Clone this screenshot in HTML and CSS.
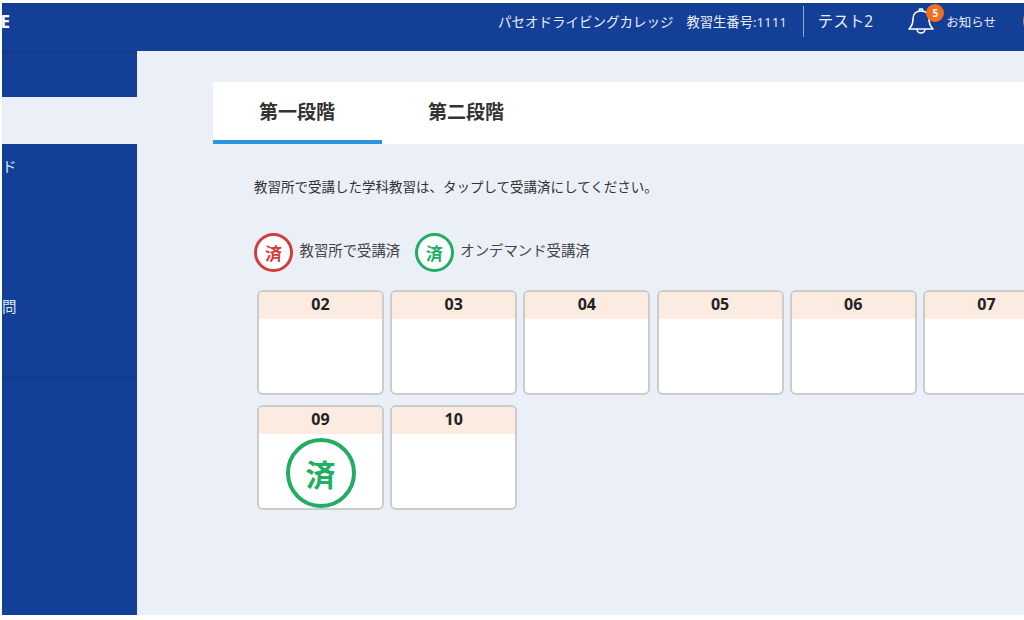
FILE: index.html
```html
<!DOCTYPE html>
<html lang="ja">
<head>
    <meta charset="UTF-8">
    <title>受講状況</title>
    <link rel="stylesheet" href="styles.css">
</head>
<body>
    <div class="screen">
        <header class="top-bar">
            <span class="logo">E</span>
            <div class="top-info">
                <span class="school">パセオドライビングカレッジ</span>
                <span class="student-no">教習生番号:1111</span>
                <span class="user-name">テスト2</span>
                <div class="notice">
                    <div class="bell">
                        <svg width="26" height="26" viewBox="0 0 26 26" fill="none" stroke="#fff" stroke-width="1.6" stroke-linejoin="round">
                            <path d="M1 21c3-3 4-5 4-10 0-5 3-8 8-8s8 3 8 8c0 5 1 7 4 10z"/>
                            <path d="M9 21a4 4 0 0 0 8 0"/>
                            <path d="M11.5 3V1h3v2"/>
                        </svg>
                        <span class="badge">5</span>
                    </div>
                    <span>お知らせ</span>
                </div>
                <span class="avatar"></span>
            </div>
        </header>
        <div class="main">
            <nav class="side-nav">
                <div class="nav-item nav-first"></div>
                <div class="nav-item nav-active"></div>
                <div class="nav-item nav-tall"><span>ド</span></div>
                <div class="nav-item nav-tall-2"><span>問</span></div>
                <div class="nav-item nav-rest"></div>
            </nav>
            <section class="content">
                <div class="tabs">
                    <div class="tab tab-active">第一段階</div>
                    <div class="tab">第二段階</div>
                </div>
                <div class="panel">
                    <p class="guide">教習所で受講した学科教習は、タップして受講済にしてください。</p>
                    <div class="legend">
                        <span class="stamp stamp-red">済</span>
                        <span class="legend-text">教習所で受講済</span>
                        <span class="stamp stamp-green">済</span>
                        <span class="legend-text">オンデマンド受講済</span>
                    </div>
                    <div class="lessons">
                        <div class="lesson"><div class="lesson-no">02</div><div class="lesson-body"></div></div>
                        <div class="lesson"><div class="lesson-no">03</div><div class="lesson-body"></div></div>
                        <div class="lesson"><div class="lesson-no">04</div><div class="lesson-body"></div></div>
                        <div class="lesson"><div class="lesson-no">05</div><div class="lesson-body"></div></div>
                        <div class="lesson"><div class="lesson-no">06</div><div class="lesson-body"></div></div>
                        <div class="lesson"><div class="lesson-no">07</div><div class="lesson-body"></div></div>
                        <div class="lesson"><div class="lesson-no">09</div><div class="lesson-body"><span class="stamp stamp-green stamp-big">済</span></div></div>
                        <div class="lesson"><div class="lesson-no">10</div><div class="lesson-body"></div></div>
                    </div>
                </div>
            </section>
        </div>
    </div>
</body>
</html>
```

FILE: styles.css
```css
* {
    margin: 0;
    padding: 0;
    box-sizing: border-box;
}

html, body {
    height: 100%;
    overflow: hidden;
    background: #fff;
}

body {
    font-family: "Open Sans", "Noto Sans CJK JP", sans-serif;
    color: #333;
}

.screen {
    width: 1022px;
    height: 612px;
    margin: 3px 0 0 2px;
    display: flex;
    flex-direction: column;
    background: #ebf0f8;
    overflow: hidden;
}

.top-bar {
    height: 48px;
    flex: none;
    padding-bottom: 12px;
    background: #133f96;
    color: #e8edf6;
    display: flex;
    align-items: center;
    justify-content: space-between;
    overflow: hidden;
}

.logo {
    font-size: 17px;
    font-weight: 700;
    color: #fff;
    width: 8px;
    overflow: hidden;
    direction: rtl;
}

.top-info {
    display: flex;
    align-items: center;
    font-size: 12.5px;
    margin-right: -27px;
}

.school {
    font-size: 13.5px;
}

.student-no {
    margin-left: 13px;
    font-size: 13.3px;
}

.user-name {
    margin-left: 16px;
    padding-left: 14px;
    border-left: 1px solid #8fa6d2;
    height: 31px;
    line-height: 31px;
    font-size: 15.5px;
}

.notice {
    margin-left: 35px;
    display: flex;
    align-items: center;
}

.bell {
    position: relative;
    width: 26px;
    height: 26px;
    margin-right: 12px;
}

.badge {
    position: absolute;
    top: -4px;
    left: 18px;
    width: 18px;
    height: 18px;
    border-radius: 50%;
    background: #f2701d;
    color: #fff;
    font-size: 10px;
    font-weight: 700;
    line-height: 18px;
    text-align: center;
}

.avatar {
    flex: none;
    width: 28px;
    height: 28px;
    margin-left: 27px;
    border-radius: 50%;
    background: #c9835f;
}

.main {
    flex: 1;
    display: flex;
    min-height: 0;
}

.side-nav {
    width: 135px;
    flex: none;
    display: flex;
    flex-direction: column;
    color: #dfe6f3;
    font-size: 14.5px;
}

.nav-item {
    background: #133f96;
}

.nav-first {
    height: 46px;
    border-top: 1px solid #103585;
}

.nav-active {
    height: 47px;
    background: #ebf0f8;
}

.nav-tall {
    height: 142px;
    padding-top: 11px;
}

.nav-tall-2 {
    height: 92px;
    border-bottom: 1px solid #103585;
    padding-top: 9px;
}

.nav-rest {
    flex: 1;
}

.content {
    flex: 1;
    min-width: 0;
    padding: 31px 0 0 76px;
}

.tabs {
    height: 62px;
    background: #fff;
    display: flex;
}

.tab {
    width: 169px;
    padding-right: 1px;
    text-align: center;
    font-size: 19px;
    font-weight: 700;
    line-height: 60px;
    color: #333;
}

.tab-active {
    border-bottom: 4px solid #2b96dd;
}

.panel {
    padding: 34px 0 0 41px;
}

.guide {
    font-size: 13.5px;
    line-height: 18px;
    color: #333;
}

.legend {
    margin-top: 37px;
    display: flex;
    align-items: center;
}

.legend-text {
    font-size: 14.4px;
    color: #444;
    margin: 0 14.5px 0 6.5px;
    position: relative;
    top: -3px;
}

.stamp {
    flex: none;
    width: 39px;
    height: 39px;
    border-radius: 50%;
    border: 3px solid;
    background: #fff;
    display: flex;
    align-items: center;
    justify-content: center;
    font-size: 17px;
    font-weight: 700;
    font-family: "Noto Sans CJK JP", sans-serif;
}

.stamp-red {
    color: #d23c3c;
}

.stamp-green {
    color: #21ad62;
}

.stamp-big {
    width: 70px;
    height: 70px;
    border-width: 4px;
    font-size: 30px;
}

.lessons {
    margin-top: 18px;
    margin-left: 3px;
    width: 810px;
    display: flex;
    flex-wrap: wrap;
    gap: 10px 6.2px;
}

.lesson {
    width: 127px;
    height: 105px;
    background: #fff;
    border: 2px solid #ccc;
    border-radius: 6px;
    overflow: hidden;
    display: flex;
    flex-direction: column;
}

.lesson-no {
    height: 27px;
    flex: none;
    background: #fbebe0;
    text-align: center;
    font-size: 16px;
    font-weight: 700;
    line-height: 24px;
    color: #222;
}

.lesson-body {
    flex: 1;
    padding-top: 4px;
    display: flex;
    justify-content: center;
    align-items: center;
}
```
